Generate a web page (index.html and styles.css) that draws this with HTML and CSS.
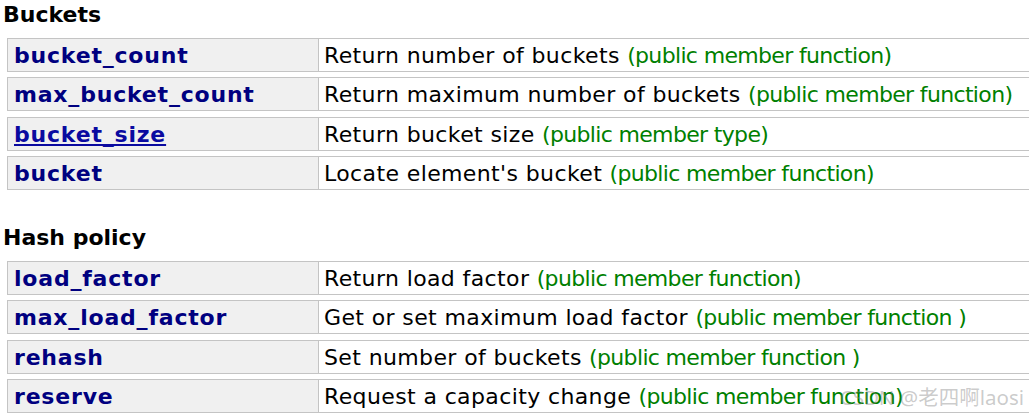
FILE: index.html
```html
<!DOCTYPE html>
<html>
<head>
<meta charset="utf-8">
<link rel="stylesheet" href="styles.css">
</head>
<body>
<div class="page">
  <section class="group">
    <h3 class="group-title">Buckets</h3>
    <div class="rows">
      <div class="row"><div class="name"><b>bucket_count</b></div><div class="desc">Return number of buckets <span class="kind">(public member function)</span></div></div>
      <div class="row"><div class="name"><b>max_bucket_count</b></div><div class="desc">Return maximum number of buckets <span class="kind">(public member function)</span></div></div>
      <div class="row"><div class="name"><a class="link" href="#">bucket_size</a></div><div class="desc">Return bucket size <span class="kind">(public member type)</span></div></div>
      <div class="row"><div class="name"><b>bucket</b></div><div class="desc">Locate element's bucket <span class="kind">(public member function)</span></div></div>
    </div>
  </section>
  <section class="group">
    <h3 class="group-title">Hash policy</h3>
    <div class="rows">
      <div class="row"><div class="name"><b>load_factor</b></div><div class="desc">Return load factor <span class="kind">(public member function)</span></div></div>
      <div class="row"><div class="name"><b>max_load_factor</b></div><div class="desc">Get or set maximum load factor <span class="kind">(public member function )</span></div></div>
      <div class="row"><div class="name"><b>rehash</b></div><div class="desc">Set number of buckets <span class="kind">(public member function )</span></div></div>
      <div class="row"><div class="name"><b>reserve</b></div><div class="desc">Request a capacity change <span class="kind">(public member function)</span></div></div>
    </div>
  </section>
  <div class="watermark">CSDN @老四啊laosi</div>
</div>
</body>
</html>
```

FILE: styles.css
```css
html, body {
  margin: 0;
  padding: 0;
  background: #ffffff;
  overflow: hidden;
}
body {
  font-family: "DejaVu Sans", Verdana, "Noto Sans CJK SC", sans-serif;
  font-size: 22px;
  color: #000;
}
.page {
  position: relative;
  width: 1029px;
  height: 419px;
  padding-top: 2px;
  box-sizing: border-box;
}
.group + .group {
  margin-top: 35px;
}
.group-title {
  margin: 0 0 10px 3px;
  font-size: 22px;
  line-height: 26px;
  font-weight: bold;
  color: #000;
}
.rows {
  display: flex;
  flex-direction: column;
  gap: 5.33px;
  margin-left: 7px;
}
.row {
  display: grid;
  grid-template-columns: 311px 1fr;
  width: 1060px;
  height: 34px;
  box-sizing: border-box;
  border: 1px solid #c4c4c4;
  border-right: none;
}
.name {
  background: #f0f0f0;
  border-right: 1px solid #c4c4c4;
  padding: 1px 0 0 6px;
  line-height: 31px;
  color: #000080;
  white-space: nowrap;
  letter-spacing: 0.8px;
}
.name b {
  font-weight: bold;
}
.link {
  font-weight: bold;
  color: #0a0aa0;
  text-decoration: underline;
}
.desc {
  padding: 1px 0 0 5px;
  line-height: 31px;
  white-space: nowrap;
  background: #fff;
  letter-spacing: 0.38px;
}
.kind {
  color: #008000;
  letter-spacing: -0.66px;
}
.watermark {
  position: absolute;
  right: 5px;
  bottom: 11px;
  font-family: "Noto Sans", "Noto Sans CJK SC", sans-serif;
  font-size: 20.5px;
  line-height: 22px;
  color: rgba(130, 130, 130, 0.42);
  white-space: nowrap;
}
```
